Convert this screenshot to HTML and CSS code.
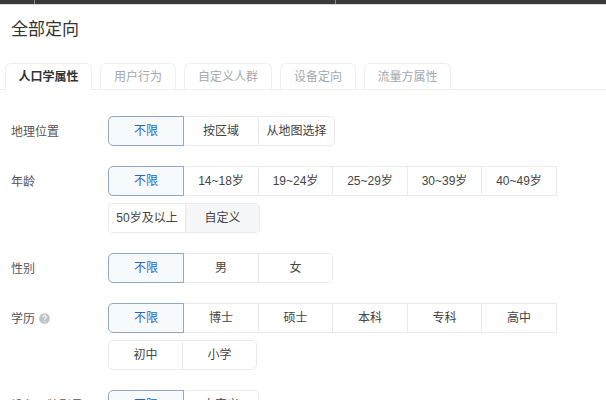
FILE: index.html
```html
<!DOCTYPE html>
<html lang="zh-CN">
<head>
<meta charset="utf-8">
<title>全部定向</title>
<link rel="stylesheet" href="styles.css">
</head>
<body>
<div class="topbar"><div class="seg seg-a"></div><div class="seg seg-b"></div><div class="seg"></div></div>
<h1 class="title">全部定向</h1>
<div class="tabs">
  <div class="tab active">人口学属性</div>
  <div class="tab tab-b">用户行为</div>
  <div class="tab tab-a">自定义人群</div>
  <div class="tab tab-b">设备定向</div>
  <div class="tab tab-c">流量方属性</div>
</div>
<div class="form">
  <div class="row">
    <div class="label">地理位置</div>
    <div class="options">
      <div class="group">
        <div class="opt sel w76">不限</div><div class="opt w76">按区域</div><div class="opt w77">从地图选择</div>
      </div>
    </div>
  </div>
  <div class="row">
    <div class="label">年龄</div>
    <div class="options">
      <div class="group square">
        <div class="opt sel w76">不限</div><div class="opt w76">14~18岁</div><div class="opt w75">19~24岁</div><div class="opt w76">25~29岁</div><div class="opt w75">30~39岁</div><div class="opt w76">40~49岁</div>
      </div>
      <div class="group">
        <div class="opt w78">50岁及以上</div><div class="opt alt w75">自定义</div>
      </div>
    </div>
  </div>
  <div class="row">
    <div class="label">性别</div>
    <div class="options">
      <div class="group">
        <div class="opt sel w76">不限</div><div class="opt w76">男</div><div class="opt w75">女</div>
      </div>
    </div>
  </div>
  <div class="row">
    <div class="label">学历<svg class="help" viewBox="0 0 12 12" aria-hidden="true"><circle cx="6" cy="6" r="5.8" fill="#c0c3c6"/><path d="M4.2 4.7a1.8 1.8 0 1 1 2.7 1.5c-.6.3-.9.6-.9 1.2" fill="none" stroke="#fff" stroke-width="1.1"/><circle cx="6" cy="9.2" r=".7" fill="#fff"/></svg></div>
    <div class="options">
      <div class="group square">
        <div class="opt sel w76">不限</div><div class="opt w76">博士</div><div class="opt w75">硕士</div><div class="opt w76">本科</div><div class="opt w75">专科</div><div class="opt w76">高中</div>
      </div>
      <div class="group">
        <div class="opt w75">初中</div><div class="opt w75">小学</div>
      </div>
    </div>
  </div>
  <div class="row">
    <div class="label">设备品牌型号</div>
    <div class="options">
      <div class="group">
        <div class="opt sel w76">不限</div><div class="opt w76">自定义</div>
      </div>
    </div>
  </div>
</div>
</body>
</html>
```
FILE: styles.css
```css
* { box-sizing: border-box; }
html, body { margin: 0; height: 400px; overflow: hidden; background: #fff; }
body { font-family: "Liberation Sans", "Noto Sans CJK SC", sans-serif; font-size: 12px; color: #444; }
.topbar { display: flex; height: 5px; background: #393939; border-bottom: 1px solid #d8d8d8; }
.seg { flex: 1; }
.seg-a { flex: none; width: 35px; border-right: 1px solid #8a8a8a; }
.seg-b { flex: none; width: 301px; border-right: 1px solid #8a8a8a; }
.title { margin: 14px 0 0 11px; height: 21px; font-size: 17px; line-height: 21px; font-weight: 400; color: #333; }
.tabs { display: flex; gap: 8px; margin-top: 23px; padding-left: 5px; height: 27px; border-bottom: 1px solid #eceef1; }
.tab { height: 27px; line-height: 26px; text-align: center; color: #a4a8ad; border: 1px solid #eceef1; border-bottom: 0; border-radius: 6px 6px 0 0; }
.tab-a { width: 88px; }
.tab-b { width: 76px; }
.tab-c { width: 87px; }
.tab.active { color: #333; font-weight: 700; background: #fff; width: 87px; }
.form { display: flex; flex-direction: column; gap: 20px; margin-top: 26px; padding-left: 11px; }
.row { display: flex; }
.label { width: 97px; height: 30px; line-height: 30px; padding-top: 1px; color: #555; display: flex; align-items: center; }
.help { width: 11px; height: 11px; margin-left: 4px; }
.options { display: flex; flex-direction: column; gap: 7px; align-items: flex-start; }
.group { display: flex; height: 30px; border-radius: 5px; }
.opt { height: 30px; line-height: 28px; text-align: center; border: 1px solid #e8eaed; margin-left: -1px; background: #fff; color: #444; }
.opt:first-child { margin-left: 0; border-radius: 5px 0 0 5px; }
.opt:last-child { border-radius: 0 5px 5px 0; }
.square .opt:last-child { border-radius: 0; }
.opt.sel { color: #2b67b8; background: #f6fafd; border-color: #8fa6c4; position: relative; z-index: 1; }
.opt.alt { background: #f6f7f9; }
.w75 { width: 75px; }
.w76 { width: 76px; }
.w77 { width: 77px; }
.w78 { width: 78px; }
```
